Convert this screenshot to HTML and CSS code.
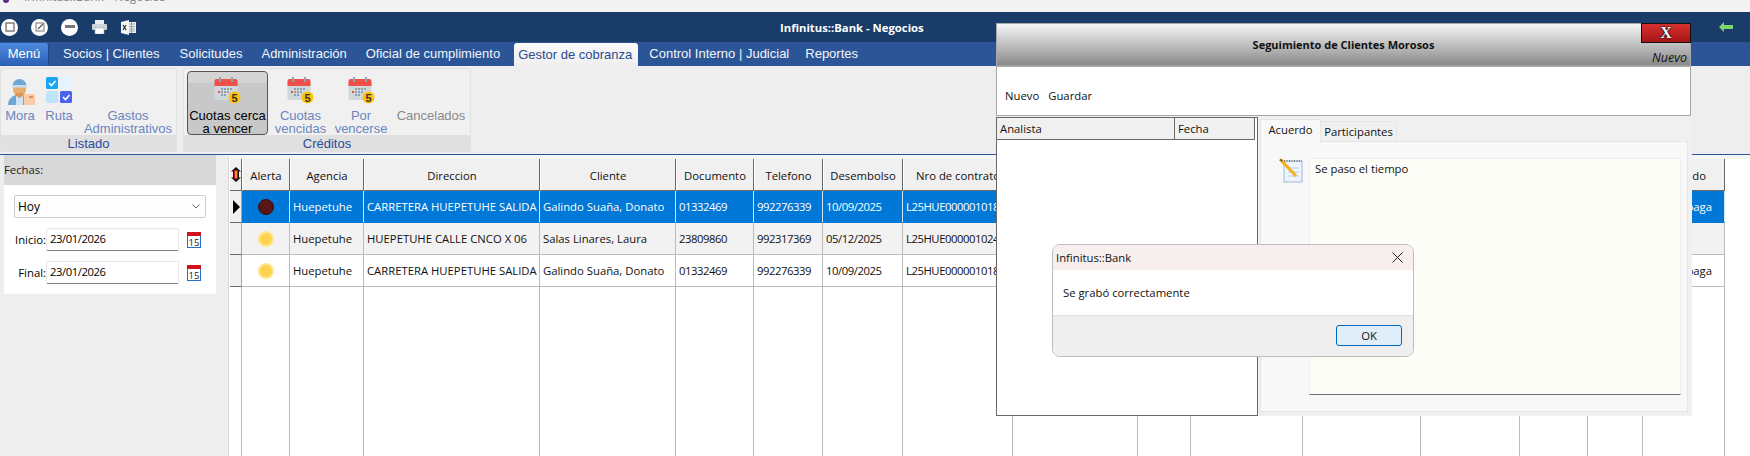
FILE: index.html
```html
<!DOCTYPE html>
<html lang="es">
<head>
<meta charset="utf-8">
<title>Infinitus::Bank - Negocios</title>
<link rel="stylesheet" href="styles.css">
</head>
<body>
<div class="topstrip">
  <span class="app-dot"></span>
  <span class="top-title">Infinitus::Bank - Negocios</span>
</div>

<header class="titlebar">
  <div class="qa">
    <span class="round"><svg width="10" height="10" viewBox="0 0 10 10"><rect x="1" y="1" width="8" height="8" fill="none" stroke="#777" stroke-width="1.4"/></svg></span>
    <span class="round"><svg width="10" height="10" viewBox="0 0 10 10"><rect x="1" y="1" width="8" height="8" fill="none" stroke="#777"/><path d="M3 7L8 2" stroke="#555" stroke-width="1.2"/></svg></span>
    <span class="round"><svg width="10" height="4" viewBox="0 0 10 4"><rect width="10" height="3" fill="#777"/></svg></span>
    <svg class="qa-printer" width="15" height="14" viewBox="0 0 15 14"><rect x="3" y="0" width="9" height="4" fill="#eee"/><rect x="0" y="4" width="15" height="6" rx="1" fill="#cfd4d8"/><rect x="3" y="8" width="9" height="6" fill="#fff" stroke="#9aa" stroke-width=".6"/></svg>
    <svg class="qa-excel" width="15" height="15" viewBox="0 0 15 15"><rect x="5" y="2" width="10" height="11" fill="#eef1f4"/><path d="M7 4h7M7 6.500h7M7 9h7M7 11h7M10.500 2v11" stroke="#8a949c" stroke-width=".8"/><path d="M0 2l8-2v15l-8-2z" fill="#f5f5f5"/><path d="M2 5l3 5M5 5l-3 5" stroke="#333" stroke-width="1.3"/></svg>
  </div>
  <div class="app-title">Infinitus::Bank - Negocios</div>
  <div class="nav-icons">
    <svg width="14" height="10" viewBox="0 0 14 10"><path d="M0 5l5-5v3h9v4H5v3z" fill="#7fd66f"/></svg>
    <svg class="nav-doc" width="10" height="12" viewBox="0 0 10 12"><rect width="10" height="12" fill="#dbe8f7"/><path d="M2 3h6M2 6h6M2 9h6" stroke="#5a7fb0"/></svg>
  </div>
</header>

<nav class="tabs">
  <span class="tab-menu">Menú</span>
  <span class="tab t1">Socios | Clientes</span>
  <span class="tab t2a">Solicitudes</span>
  <span class="tab t2">Administración</span>
  <span class="tab t2">Oficial de cumplimiento</span>
  <span class="tab tab-active">Gestor de cobranza</span>
  <span class="tab t3">Control Interno | Judicial</span>
  <span class="tab t4">Reportes</span>
</nav>

<section class="ribbon">
  <div class="group g-listado">
    <div class="group-btns">
      <div class="rb w-mora">
        <span class="rb-icon">
          <svg class="mora-ico" width="27" height="28" viewBox="0 0 27 28"><path d="M0 28c0-6 4-9 8-10h5c3 .5 5 2 6 4v6z" fill="#6ea6d8"/><rect x="8" y="18" width="7" height="10" fill="#cfe2f3"/><path d="M5 10h13v3a6.500 6.500 0 0 1-13 0z" fill="#e8ae70"/><path d="M7 18l4.500 3 4.500-3-2-2H9z" fill="#d9965a"/><path d="M4.500 9a7 7 0 0 1 14 0z" fill="#6ea6d8"/><rect x="4" y="8" width="15" height="2.500" rx="1" fill="#c5def2"/><rect x="16" y="17" width="11" height="11" fill="#f9cba6"/><rect x="21" y="19" width="4" height="2" fill="#e58e5c"/></svg>
        </span>
        <span class="rb-label">Mora</span>
      </div>
      <div class="rb w-ruta">
        <span class="rb-icon">
          <svg width="26" height="26" viewBox="0 0 26 26"><rect x="0" y="0" width="12" height="12" rx="1.500" fill="#19a7f5"/><rect x="14" y="0" width="12" height="12" rx="1.500" fill="#e4f3fe"/><rect x="0" y="14" width="12" height="12" rx="1.500" fill="#bfe3fb"/><rect x="14" y="14" width="12" height="12" rx="1.500" fill="#4a62ee"/><path d="M3 6l2.500 2.500L9.500 4M17 20l2.500 2.500L23.500 18" fill="none" stroke="#fff" stroke-width="1.600"/></svg>
        </span>
        <span class="rb-label">Ruta</span>
      </div>
      <div class="rb w-gastos">
        <span class="rb-icon"></span>
        <span class="rb-label">Gastos Administrativos</span>
      </div>
    </div>
    <div class="group-name">Listado</div>
  </div>
  <div class="group g-creditos">
    <div class="group-btns">
      <div class="rb w-cerca rb-active">
        <span class="rb-icon"><svg width="27" height="27" viewBox="0 0 27 27"><rect x="0.500" y="2" width="23" height="21" rx="2" fill="#cfd8dc"/><path d="M0.500 9V4a2 2 0 0 1 2-2h19a2 2 0 0 1 2 2v5z" fill="#f0504a"/><path d="M6 0v5M18 0v5" stroke="#90a4ae" stroke-width="2"/><path d="M7 12h11M7 15h8M7 18h5" stroke="#90a0a8" stroke-width="2" stroke-dasharray="2 1"/><rect x="4" y="14" width="2" height="2" fill="#f0504a"/><circle cx="20.500" cy="20.500" r="6" fill="#ffc107"/><text x="20.500" y="24.500" text-anchor="middle" class="svg5">5</text></svg></span>
        <span class="rb-label">Cuotas cerca a vencer</span>
      </div>
      <div class="rb w-venc">
        <span class="rb-icon"><svg width="27" height="27" viewBox="0 0 27 27"><rect x="0.500" y="2" width="23" height="21" rx="2" fill="#cfd8dc"/><path d="M0.500 9V4a2 2 0 0 1 2-2h19a2 2 0 0 1 2 2v5z" fill="#f0504a"/><path d="M6 0v5M18 0v5" stroke="#90a4ae" stroke-width="2"/><path d="M7 12h11M7 15h8M7 18h5" stroke="#90a0a8" stroke-width="2" stroke-dasharray="2 1"/><rect x="4" y="14" width="2" height="2" fill="#f0504a"/><circle cx="20.500" cy="20.500" r="6" fill="#ffc107"/><text x="20.500" y="24.500" text-anchor="middle" class="svg5">5</text></svg></span>
        <span class="rb-label">Cuotas vencidas</span>
      </div>
      <div class="rb w-por">
        <span class="rb-icon"><svg width="27" height="27" viewBox="0 0 27 27"><rect x="0.500" y="2" width="23" height="21" rx="2" fill="#cfd8dc"/><path d="M0.500 9V4a2 2 0 0 1 2-2h19a2 2 0 0 1 2 2v5z" fill="#f0504a"/><path d="M6 0v5M18 0v5" stroke="#90a4ae" stroke-width="2"/><path d="M7 12h11M7 15h8M7 18h5" stroke="#90a0a8" stroke-width="2" stroke-dasharray="2 1"/><rect x="4" y="14" width="2" height="2" fill="#f0504a"/><circle cx="20.500" cy="20.500" r="6" fill="#ffc107"/><text x="20.500" y="24.500" text-anchor="middle" class="svg5">5</text></svg></span>
        <span class="rb-label">Por vencerse</span>
      </div>
      <div class="rb w-canc rb-muted">
        <span class="rb-icon"></span>
        <span class="rb-label">Cancelados</span>
      </div>
    </div>
    <div class="group-name">Créditos</div>
  </div>
</section>

<main class="content">
  <aside class="filter">
    <div class="filter-head">Fechas:</div>
    <div class="filter-body">
      <div class="combo"><span>Hoy</span>
        <svg width="8" height="5" viewBox="0 0 8 5"><path d="M0.500 0.500L4 4L7.500 0.500" fill="none" stroke="#666"/></svg>
      </div>
      <div class="date-row">
        <label class="date-label">Inicio:</label>
        <span class="date-input num">23/01/2026</span>
        <svg class="date-cal" width="14" height="16" viewBox="0 0 14 16"><rect x="0.500" y="1" width="13" height="14.500" fill="#fff" stroke="#2a6fc9"/><rect width="14" height="4" fill="#d0121b"/><text x="7" y="13.500" text-anchor="middle" class="svg15">15</text></svg>
      </div>
      <div class="date-row">
        <label class="date-label">Final:</label>
        <span class="date-input num">23/01/2026</span>
        <svg class="date-cal" width="14" height="16" viewBox="0 0 14 16"><rect x="0.500" y="1" width="13" height="14.500" fill="#fff" stroke="#2a6fc9"/><rect width="14" height="4" fill="#d0121b"/><text x="7" y="13.500" text-anchor="middle" class="svg15">15</text></svg>
      </div>
    </div>
  </aside>

  <div class="grid-wrap">
    <div class="grid">
      <div class="gh rhh"><svg width="10" height="15" viewBox="0 0 10 15"><path d="M5 0l5 4.500H8v6h2L5 15 0 10.500h2v-6H0z" fill="#111"/><rect x="3" y="3" width="4" height="9" fill="#c8102e"/><rect x="4.300" y="4" width="1.400" height="7" fill="#ffd400"/></svg></div>
      <div class="gh">Alerta</div><div class="gh">Agencia</div><div class="gh">Direccion</div><div class="gh">Cliente</div><div class="gh">Documento</div><div class="gh">Telefono</div><div class="gh">Desembolso</div><div class="gh">Nro de contrato</div><div class="gh"></div><div class="gh"></div><div class="gh"></div><div class="gh"></div><div class="gh"></div><div class="gh"></div><div class="gh"></div><div class="gh gh-end">Estado</div>

      <div class="row row-sel">
        <div class="rh"><span class="tri"></span></div>
        <div class="c c-dot"><span class="dot dot-red"></span></div><div class="c">Huepetuhe</div><div class="c">CARRETERA HUEPETUHE SALIDA A</div><div class="c">Galindo Suaña, Donato</div><div class="c num">01332469</div><div class="c num">992276339</div><div class="c num">10/09/2025</div><div class="c num">L25HUE0000010182</div><div class="c"></div><div class="c"></div><div class="c"></div><div class="c"></div><div class="c"></div><div class="c"></div><div class="c"></div><div class="c c-end">Impaga</div>
      </div>
      <div class="row row-alt">
        <div class="rh"></div>
        <div class="c c-dot"><span class="dot dot-yel"></span></div><div class="c">Huepetuhe</div><div class="c">HUEPETUHE CALLE CNCO X 06</div><div class="c">Salas Linares, Laura</div><div class="c num">23809860</div><div class="c num">992317369</div><div class="c num">05/12/2025</div><div class="c num">L25HUE0000010245</div><div class="c"></div><div class="c"></div><div class="c"></div><div class="c"></div><div class="c"></div><div class="c"></div><div class="c"></div><div class="c"></div>
      </div>
      <div class="row">
        <div class="rh"></div>
        <div class="c c-dot"><span class="dot dot-yel"></span></div><div class="c">Huepetuhe</div><div class="c">CARRETERA HUEPETUHE SALIDA A</div><div class="c">Galindo Suaña, Donato</div><div class="c num">01332469</div><div class="c num">992276339</div><div class="c num">10/09/2025</div><div class="c num">L25HUE0000010182</div><div class="c"></div><div class="c"></div><div class="c"></div><div class="c"></div><div class="c"></div><div class="c"></div><div class="c"></div><div class="c c-end">Impaga</div>
      </div>
      <div class="row row-fill">
        <div class="c"></div><div class="c"></div><div class="c"></div><div class="c"></div><div class="c"></div><div class="c"></div><div class="c"></div><div class="c"></div><div class="c"></div><div class="c"></div><div class="c"></div><div class="c"></div><div class="c"></div><div class="c"></div><div class="c"></div><div class="c"></div><div class="c"></div>
      </div>
    </div>
  </div>
</main>

<div class="modal">
  <div class="modal-head">
    <span class="modal-title">Seguimiento de Clientes Morosos</span>
    <span class="modal-close">X</span>
    <span class="modal-mode">Nuevo</span>
  </div>
  <div class="modal-tools"><span>Nuevo</span><span>Guardar</span></div>
  <div class="modal-body">
    <div class="list">
      <div class="list-head"><span class="lh-a">Analista</span><span class="lh-f">Fecha</span></div>
    </div>
    <div class="pane">
      <div class="pane-tabs">
        <span class="ptab ptab-on">Acuerdo</span>
        <span class="ptab">Participantes</span>
      </div>
      <div class="pane-page">
        <svg class="note" width="24" height="25" viewBox="0 0 24 25">
          <rect x="5" y="3" width="18" height="21" fill="#eef4fb" stroke="#9db8d8"/>
          <path d="M9 10h11M9 14h11M9 18h11" stroke="#b8cce2"/>
          <path d="M5 3h18" stroke="#777" stroke-dasharray="1 1.500" stroke-width="2"/>
          <path d="M1 1l16 17" stroke="#f2b01e" stroke-width="3"/>
          <path d="M1 1l3 1-2 2z" fill="#555"/>
        </svg>
        <div class="memo">Se paso el tiempo</div>
      </div>
    </div>
  </div>
</div>

<div class="msgbox">
  <div class="msg-title"><span>Infinitus::Bank</span>
    <svg width="11" height="11" viewBox="0 0 11 11"><path d="M0.500 0.500l10 10M10.500 0.500l-10 10" stroke="#222"/></svg>
  </div>
  <div class="msg-text">Se grabó correctamente</div>
  <div class="msg-foot"><span class="msg-ok">OK</span></div>
</div>
</body>
</html>
```

FILE: styles.css
```css
* { box-sizing: border-box; }
html, body { margin: 0; padding: 0; width: 1750px; height: 456px; overflow: hidden; }
body {
  position: relative;
  display: flex;
  flex-direction: column;
  background: #eeeeee;
  font-family: "Liberation Sans", Arial, sans-serif;
  font-size: 13px;
}
.svg5 { font: bold 11px "Liberation Sans", sans-serif; fill: #333; }
.svg15 { font: 9.5px "Open Sans", sans-serif; fill: #222; }
.num { letter-spacing: -0.45px; }

/* window strip */
.topstrip {
  height: 12px; flex: none; background: #f3f3f3; overflow: hidden;
  display: flex; align-items: flex-start;
}
.app-dot { width: 6px; height: 3px; margin-left: 3px; background: #5b2a86; border-radius: 0 0 3px 3px; }
.top-title {
  margin: -10px 0 0 15px; font: 12px/14px "Open Sans", sans-serif; color: #888;
}

/* title bar */
.titlebar {
  height: 30px; flex: none; background: #1a3c68; color: #fff;
  display: flex; align-items: center; position: relative;
}
.qa { display: flex; align-items: center; width: 780px; padding-left: 1px; }
.round {
  width: 17px; height: 17px; border-radius: 50%; background: #fff; margin-right: 13px;
  display: flex; align-items: center; justify-content: center;
}
.qa-printer { margin-left: 1px; }
.qa-excel { margin-left: 14px; }
.app-title { width: 143px; text-align: center; white-space: nowrap; font: bold 11.3px "Open Sans", sans-serif; }
.nav-icons { margin-left: auto; display: flex; align-items: center; }
.nav-icons svg { margin-right: 17px; }
.nav-icons .nav-doc { margin-right: -10px; }

/* tabs */
.tabs {
  height: 24px; flex: none; background: #2b5597; color: #f2f5fb;
  display: flex; align-items: flex-end; white-space: nowrap;
}
.tab-menu {
  width: 49px; height: 23px; text-align: center; line-height: 21px; color: #fff;
  background: linear-gradient(#4f8ae0, #2a5fb4); border-radius: 0 3px 0 0;
  border-right: 1px solid #1d4a8e;
}
.tab { height: 24px; line-height: 24px; }
.t1 { padding-left: 14px; }
.t2a { padding-left: 20px; }
.t2 { padding-left: 19px; }
.t3 { padding-left: 11px; }
.t4 { padding-left: 16px; }
.tab-active {
  margin-left: 14px; padding: 0 6px 0 4px; height: 23px; line-height: 23px; color: #2c4a90;
  background: linear-gradient(#fbfbfb, #eeeeee); border-radius: 3px 3px 0 0;
}

/* ribbon */
.ribbon {
  height: 89px; flex: none; padding-top: 2px; display: flex; background: #eeeeee;
  border-bottom: 1px solid #2b5597;
}
.group {
  height: 84px; background: #f0f0f0; border: 1px solid #e2e2e2; border-radius: 2px;
  display: flex; flex-direction: column;
}
.g-listado { width: 177px; }
.g-creditos { width: 288px; margin-left: 6px; }
.group-btns { flex: 1; display: flex; padding-top: 2px; min-height: 0; }
.g-creditos .group-btns { padding-left: 3px; }
.group-name {
  height: 16px; flex: none; line-height: 18px; text-align: center; background: #e0e0e0; color: #2b4a9c;
}
.rb {
  height: 64px; border: 1px solid transparent; border-radius: 4px; color: #6a86bf;
  display: flex; flex-direction: column; align-items: center; text-align: center;
  line-height: 13px; flex: none;
}
.rb-icon { height: 37px; flex: none; padding-top: 5px; display: block; }
.rb-label { display: block; }
.mora-ico { margin-left: 2px; }
.w-mora { width: 38px; }
.w-ruta { width: 40px; }
.w-gastos { width: 88px; margin-left: 5px; }
.w-cerca { width: 81px; }
.w-venc { width: 57px; margin-left: 4px; }
.w-por { width: 64px; }
.w-canc { width: 76px; }
.rb-active {
  color: #000; border-color: #555;
  background: linear-gradient(#d4d4d4 0 18%, #c8c8c8 18% 100%);
}
.rb-muted { color: #8a8a8a; }

/* content */
.content { flex: 1; display: flex; min-height: 0; font-family: "Open Sans", sans-serif; font-size: 11.3px; }
.filter { width: 212px; margin: 0 12px 0 4px; height: 139px; background: #fff; flex: none; }
.filter-head { height: 30px; background: #d8d8d8; line-height: 30px; color: #222; }
.filter-body { padding: 10px 10px 0; }
.combo {
  height: 23px; width: 192px; border: 1px solid #ccc; border-radius: 2px; background: #fdfdfd;
  display: flex; align-items: center; justify-content: space-between; padding: 0 5px 0 3px;
  font-size: 12px;
}
.date-row { display: flex; align-items: center; margin-top: 10px; height: 23px; }
.date-label { width: 32px; text-align: right; }
.date-input {
  width: 133px; height: 23px; border: 1px solid #e6e6e6; border-bottom: 1px solid #808080;
  border-radius: 2px; padding-left: 3px; line-height: 19px;
}
.date-cal { margin-left: 8px; }

.grid-wrap {
  width: 1522px; flex: none; background: #fff; border-left: 1px solid #d8d8d8;
  border-top: 4px solid #f5f5f5; padding-left: 1px;
}
.grid {
  height: 100%;
  display: grid;
  grid-template-columns: 12px 48px 74px 176px 136px 78px 69px 80px 110px 125px 53px 112px 118px 99px 68px 55px 82px;
  grid-template-rows: 32px 32px 32px 32px 1fr;
  width: 1495px;
}
.row { display: contents; }
.gh {
  background: #f0f0f0; border-right: 1px solid #696969; border-bottom: 1px solid #696969; border-left: 1px solid #fff;
  display: flex; align-items: center; justify-content: center; white-space: nowrap; overflow: hidden; color: #111;
  padding-top: 2px;
}
.rhh { border-left: 0; padding: 0; }
.gh-end { justify-content: flex-end; padding-right: 18px; }
.rh {
  background: #f0f0f0; border-right: 1px solid #a8a8a8; border-bottom: 1px solid #696969;
  display: flex; align-items: center; justify-content: center;
}
.tri { width: 0; height: 0; margin-left: 1px; border-left: 7px solid #000; border-top: 7px solid transparent; border-bottom: 7px solid transparent; }
.c {
  border-right: 1px solid #bcbcbc; border-bottom: 1px solid #bcbcbc; padding-left: 3px; line-height: 31px;
  white-space: nowrap; overflow: hidden; color: #111; min-width: 0;
}
.c-dot { display: flex; align-items: center; justify-content: center; padding: 0; }
.c-end { text-align: right; padding-right: 12px; }
.row-fill .c { border-bottom: 0; }
.row-sel .c { background: #0078d7; color: #fff; border-bottom-color: #0078d7; border-right-color: #d0e4f7; }
.row-alt .c { background: #f2f2f2; }
.dot { width: 16px; height: 16px; border-radius: 50%; display: block; }
.dot-red { background: #5a1515; border: 1px solid #3a0d0d; }
.dot-yel { background: #ffd24d; border: 2px solid #ffe58f; }

/* modal */
.modal {
  position: absolute; left: 996px; top: 23px; width: 696px; height: 393px;
  display: flex; flex-direction: column; font-family: "Open Sans", sans-serif; font-size: 11.3px; color: #111;
}
.modal-head {
  height: 44px; width: 695px; flex: none; position: relative; text-align: center;
  background: linear-gradient(#f6f6f6, #8a8a8a);
  border: 1px solid #fff; border-bottom: 2px solid #a0a0a0; outline: 1px solid #a8a8a8; outline-offset: -1px;
}
.modal-title { font-size: 11px; line-height: 41px; font-weight: 700; }
.modal-close {
  position: absolute; right: -1px; top: -1px; width: 50px; height: 20px;
  background: linear-gradient(#d63030, #a81515); border: 1px solid #111; color: #fff; font-weight: 700;
  line-height: 17px; font-size: 16px; font-family: "Liberation Serif", serif;
  text-shadow: 0 0 1px #000, 0 0 1px #000, 0 0 2px #000;
}
.modal-mode { position: absolute; right: 3px; bottom: -1px; font-size: 12.5px; font-style: italic; line-height: 16px; }
.modal-tools {
  height: 49px; width: 695px; flex: none; background: #fff; border: 1px solid #a8a8a8; border-top: 0;
  display: flex; align-items: flex-end; gap: 9px; padding: 0 0 11px 8px; line-height: 16px;
}
.modal-body { flex: 1; display: flex; margin-top: 1px; min-height: 0; }
.list { width: 262px; flex: none; background: #fff; border: 1px solid #696969; padding-right: 2px; }
.list-head {
  height: 22px; display: flex; background: #f0f0f0; border-bottom: 1px solid #696969; border-right: 1px solid #696969;
  line-height: 21px;
}
.lh-a { width: 178px; padding-left: 3px; border-right: 1px solid #696969; }
.lh-f { padding-left: 3px; }
.pane { flex: 1; background: #f0f0f0; padding: 2px 4px 4px 2px; display: flex; flex-direction: column; min-width: 0; }
.pane-tabs { display: flex; height: 22px; flex: none; align-items: flex-end; }
.ptab {
  height: 20px; line-height: 20px; padding: 0 2px; width: 76px; background: #f0f0f0; text-align: center; white-space: nowrap;
  border: 1px solid #e6e6e6; border-bottom: 0; border-left: 0;
}
.ptab-on { height: 23px; width: 61px; background: #f8f8f8; border-left: 1px solid #e6e6e6; line-height: 20px; margin-bottom: -1px; position: relative; }
.pane-page {
  flex: 1; background: #f8f8f8; border: 1px solid #e6e6e6; display: flex; align-items: flex-start;
  padding: 16px 6px 16px 18px; gap: 6px; min-height: 0;
}
.note { flex: none; }
.memo {
  flex: 1; height: 100%; background: #fcfdf7; border: 1px solid #eeeeee; border-bottom: 1px solid #707070;
  padding: 2px 5px; line-height: 16px;
}

/* message box */
.msgbox {
  position: absolute; left: 1052px; top: 244px; width: 362px; height: 113px;
  background: #fff; border: 1px solid #bdbdbd; border-radius: 8px; overflow: hidden;
  display: flex; flex-direction: column; font-family: "Open Sans", sans-serif; font-size: 11.3px; color: #111;
}
.msg-title {
  height: 25px; flex: none; background: #f7eeee; display: flex; align-items: center; justify-content: space-between;
  padding: 0 10px 0 3px;
}
.msg-text { height: 45px; flex: none; padding: 15px 0 0 10px; line-height: 16px; }
.msg-foot { flex: 1; background: #efefef; border-top: 1px solid #dedede; display: flex; justify-content: flex-end; padding: 9px 11px 0 0; }
.msg-ok {
  width: 66px; height: 21px; background: #e0eef9; border: 1px solid #0067c0; border-radius: 3px;
  text-align: center; line-height: 19px;
}
```
